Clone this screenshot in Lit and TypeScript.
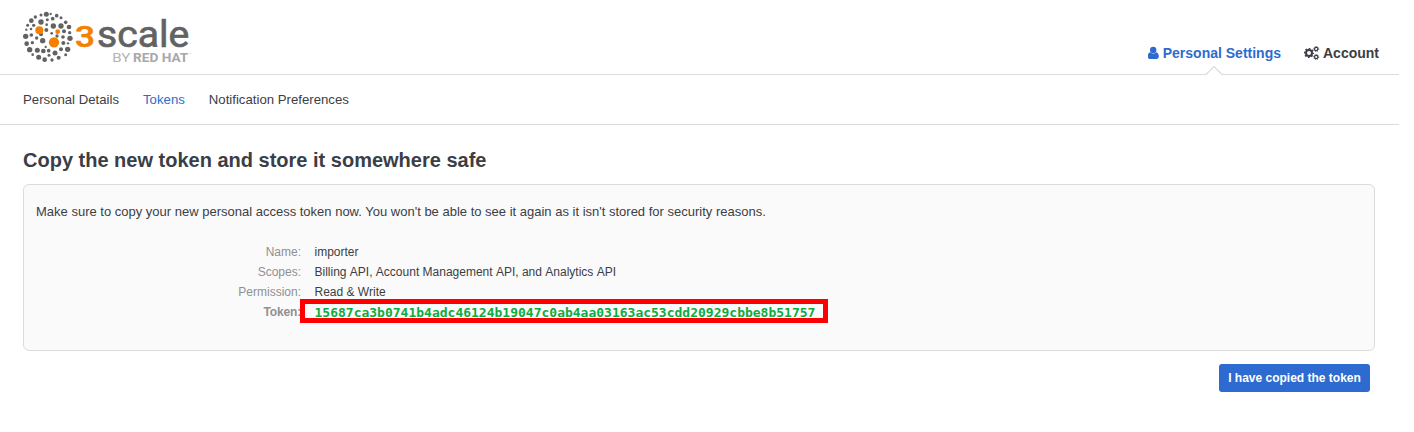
import { LitElement, html, css, svg } from "lit";
import { customElement } from "lit/decorators.js";

// Logo globe dots: x, y, radius
const GREY: number[][] = [
  [91,25,7.5],[75,27,4.5],[58,33,5],[104,24,3.5],[122,29,5.5],[46,44,7],[75,48,8],[94,41,4.5],[110,38,5.5],[135,35,4.5],
  [35,58,4.5],[53,58,5],[149,49,5.5],[112,60,8],[135,60,8],[92,56,4],[159,63,7],[31,71,3.5],[45,69,4],[91,72,6],[144,76,6],[161,80,5],
  [29,91,8],[46,87,5.5],[62,96,5],[75,85,6],[107,82,4],[123,90,5],[141,93,5.5],[162,97,8],[80,104,8],[32,113,7],[49,110,5],[142,111,6],
  [89,123,3.5],[156,112,3.5],[41,131,8],[64,133,7.5],[82,135,7],[98,134,5.5],[135,130,6],[155,130,8],[50,146,4],[117,141,7.5],[99,148,4.5],
  [68,154,7.5],[149,146,4.5],[86,161,7],[108,162,5],[128,155,6]
];
const ORANGE: number[][] = [[70,73,12],[125,77,7],[114,109,15.5]];
const dots = (list: number[][], fill: string) =>
  list.map(([x, y, r]) => svg`<circle cx=${x} cy=${y} r=${r} fill=${fill}></circle>`);

@customElement("app-root")
export class AppRoot extends LitElement {
  static styles = css`
    :host { display: block; height: 432px; background: #fff; color: #3b3e45; font-family: "Liberation Sans", Arial, sans-serif; font-size: 13px; overflow: hidden; }
    * { box-sizing: border-box; }
    .page { width: 1399px; }
    header { display: flex; justify-content: space-between; align-items: flex-start; height: 75px; border-bottom: 1px solid #dcdcdc; padding: 6px 20px 0 16px; position: relative; }
    .logo { display: block; }
    .top { display: flex; gap: 23px; padding-top: 39px; font-size: 14px; font-weight: bold; line-height: 16px; }
    .item { display: flex; }
    .active { color: #2d6bd0; }
    .user { width: 12px; height: 16px; margin-right: 3px; }
    .cogs { width: 16px; height: 16px; margin-right: 3px; }
    .notch { position: absolute; left: 1204px; top: 65px; }
    .sub { display: flex; gap: 24px; height: 50px; line-height: 50px; padding-left: 23px; border-bottom: 1px solid #dcdcdc; font-size: 13.2px; }
    main { padding: 22px 24px 0 23px; }
    h1 { font-size: 20px; line-height: 26px; margin: 0 0 11px; }
    .card { height: 167px; border: 1px solid #dcdcdc; border-radius: 6px; background: #fafafa; padding: 19px 12px; }
    p { margin: 0 0 22px; line-height: 16px; }
    .facts { display: grid; grid-template-columns: 265px 1fr; column-gap: 13.5px; grid-auto-rows: 20px; line-height: 20px; font-size: 12px; margin: 0; }
    dt { text-align: right; color: #8f9093; }
    dd { margin: 0; position: relative; }
    .scopes { font-kerning: none; }
    .strong { font-weight: bold; letter-spacing: -.15px; }
    .token { font: bold 13px/22px "DejaVu Sans Mono", monospace; color: #0cac40; }
    .mark { position: absolute; left: -14.5px; top: -3px; width: 528px; height: 24px; border: 5px solid #f00; }
    .actions { display: flex; justify-content: flex-end; padding: 13px 5px 0 0; }
    button { width: 151px; height: 28px; padding: 0; border: 0; border-radius: 3px; background: #2d6bd0; color: #fff; font: bold 12px "Liberation Sans", Arial, sans-serif; }
  `;

  render() {
    return html`
      <div class="page">
        <header>
          <svg class="logo" width="184" height="62" viewBox="0 0 552 186">
            ${dots(GREY, "#626262")}${dots(ORANGE, "#f57f00")}
            <g font-family="Roboto, sans-serif">
              <text x="177" y="123" font-size="87" font-weight="500" fill="#f57f00" stroke="#f57f00" stroke-width="1.5" textLength="60" lengthAdjust="spacingAndGlyphs">3</text>
              <text x="243" y="123" font-size="112" fill="#626262" stroke="#626262" stroke-width="2" textLength="277" lengthAdjust="spacingAndGlyphs">scale</text>
              <text x="289" y="168" font-size="39" fill="#b5b5b5" textLength="54" lengthAdjust="spacingAndGlyphs">BY</text>
              <text x="351" y="168" font-size="39" font-weight="bold" fill="#a8a8a8" textLength="166" lengthAdjust="spacingAndGlyphs">RED HAT</text>
            </g>
            <circle cx="524" cy="142" r="1.5" fill="#b5b5b5"></circle>
          </svg>
          <nav class="top">
            <span class="item active"><svg class="user" viewBox="0 0 12 16" fill="currentColor"><circle cx="5.200" cy="5" r="3.200"></circle><path d="M2.400 7.200C.6 7.500-.2 9.300-.2 11.500c0 1.500.9 2.500 2.200 2.500h6.600c1.300 0 2.200-1 2.200-2.500C10.800 9.300 10 7.500 8.200 7.200 6.600 9 4 9 2.400 7.200z"></path></svg>Personal Settings</span>
            <span class="item"><svg class="cogs" viewBox="0 0 16 16" fill="none" stroke="currentColor"><circle cx="5" cy="8" r="3" stroke-width="2"></circle><circle cx="5" cy="8" r="4.400" stroke-width="1.400" stroke-dasharray="1.800 1.656" stroke-dashoffset=".9"></circle><circle cx="12.200" cy="4" r="1.700" stroke-width="1.200"></circle><circle cx="12.200" cy="4" r="2.500" stroke-width=".9" stroke-dasharray="1 .963"></circle><circle cx="12.200" cy="12" r="1.700" stroke-width="1.200"></circle><circle cx="12.200" cy="12" r="2.500" stroke-width=".9" stroke-dasharray="1 .963"></circle></svg>Account</span>
          </nav>
          <svg class="notch" width="20" height="10" viewBox="0 0 20 10"><path d="M1.500 10 10 1.500 18.500 10z" fill="#fff"></path><path d="M1 9.500h1L10 1.500l8 8h1" fill="none" stroke="#dcdcdc" stroke-width="1.200"></path></svg>
        </header>
        <nav class="sub"><span>Personal Details</span><span class="active">Tokens</span><span>Notification Preferences</span></nav>
        <main>
          <h1>Copy the new token and store it somewhere safe</h1>
          <section class="card">
            <p>Make sure to copy your new personal access token now. You won't be able to see it again as it isn't stored for security reasons.</p>
            <dl class="facts">
              <dt>Name:</dt><dd>importer</dd>
              <dt>Scopes:</dt><dd class="scopes">Billing API, Account Management API, and Analytics API</dd>
              <dt>Permission:</dt><dd>Read &amp; Write</dd>
              <dt class="strong">Token:</dt><dd class="token">15687ca3b0741b4adc46124b19047c0ab4aa03163ac53cdd20929cbbe8b51757<span class="mark"></span></dd>
            </dl>
          </section>
          <div class="actions"><button>I have copied the token</button></div>
        </main>
      </div>`;
  }
}
